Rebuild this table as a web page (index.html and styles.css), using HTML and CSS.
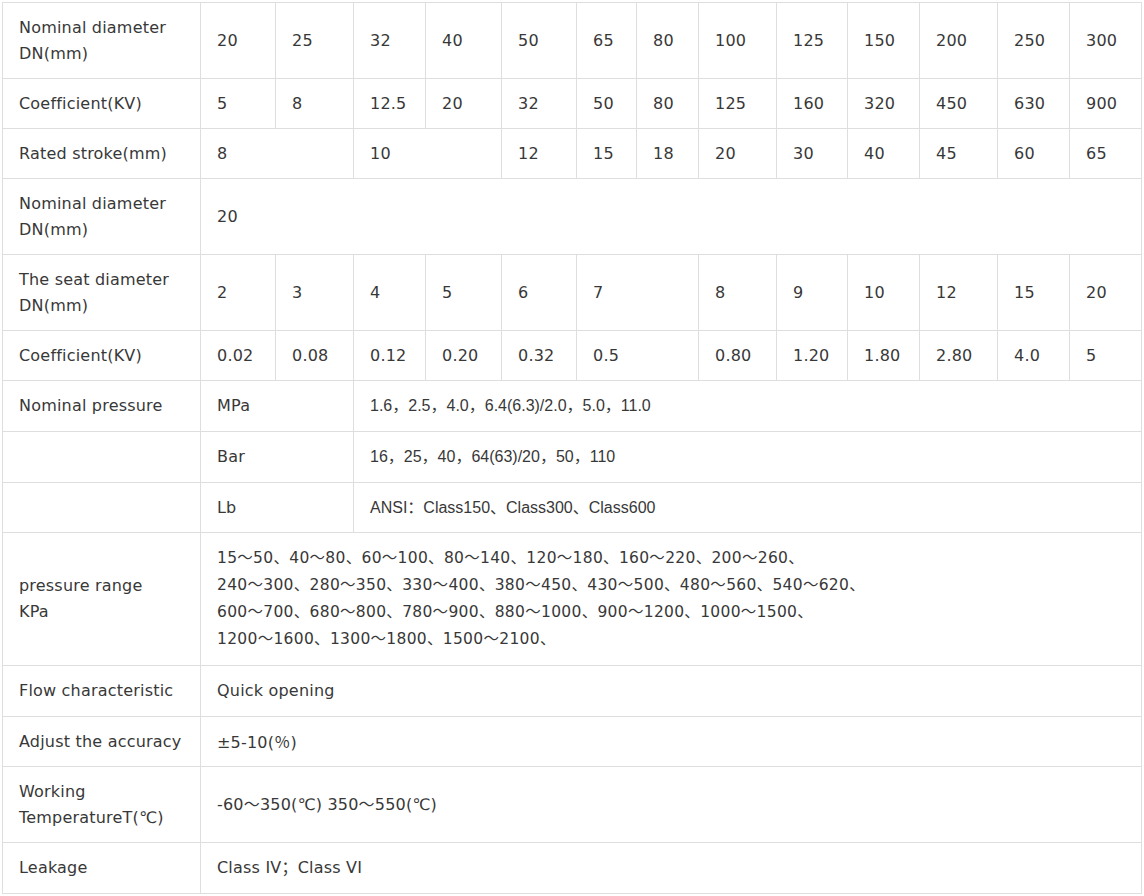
FILE: index.html
```html
<!DOCTYPE html>
<html lang="en">
<head>
<meta charset="utf-8">
<title>Parameters</title>
<link rel="stylesheet" href="styles.css">
</head>
<body>
<table class="spec">
  <colgroup>
    <col class="c-label">
    <col class="c75"><col class="c78"><col class="c72"><col class="c76"><col class="c75">
    <col class="c60"><col class="c62"><col class="c78"><col class="c71"><col class="c72">
    <col class="c78"><col class="c72"><col class="c72">
  </colgroup>
  <tbody>
    <tr class="h76">
      <td>Nominal diameter<br>DN(mm)</td>
      <td>20</td><td>25</td><td>32</td><td>40</td><td>50</td><td>65</td><td>80</td><td>100</td><td>125</td><td>150</td><td>200</td><td>250</td><td>300</td>
    </tr>
    <tr class="h50">
      <td>Coefficient(KV)</td>
      <td>5</td><td>8</td><td>12.5</td><td>20</td><td>32</td><td>50</td><td>80</td><td>125</td><td>160</td><td>320</td><td>450</td><td>630</td><td>900</td>
    </tr>
    <tr class="h50">
      <td>Rated stroke(mm)</td>
      <td colspan="2">8</td><td colspan="2">10</td><td>12</td><td>15</td><td>18</td><td>20</td><td>30</td><td>40</td><td>45</td><td>60</td><td>65</td>
    </tr>
    <tr class="h76">
      <td>Nominal diameter<br>DN(mm)</td>
      <td colspan="13">20</td>
    </tr>
    <tr class="h76">
      <td>The seat diameter<br>DN(mm)</td>
      <td>2</td><td>3</td><td>4</td><td>5</td><td>6</td><td colspan="2">7</td><td>8</td><td>9</td><td>10</td><td>12</td><td>15</td><td>20</td>
    </tr>
    <tr class="h50">
      <td>Coefficient(KV)</td>
      <td>0.02</td><td>0.08</td><td>0.12</td><td>0.20</td><td>0.32</td><td colspan="2">0.5</td><td>0.80</td><td>1.20</td><td>1.80</td><td>2.80</td><td>4.0</td><td>5</td>
    </tr>
    <tr class="h51">
      <td>Nominal pressure</td>
      <td colspan="2">MPa</td>
      <td colspan="11" class="arial">1.6，2.5，4.0，6.4(6.3)/2.0，5.0，11.0</td>
    </tr>
    <tr class="h51">
      <td></td>
      <td colspan="2">Bar</td>
      <td colspan="11" class="arial">16，25，40，64(63)/20，50，110</td>
    </tr>
    <tr class="h50">
      <td></td>
      <td colspan="2">Lb</td>
      <td colspan="11" class="arial">ANSI：Class150、Class300、Class600</td>
    </tr>
    <tr class="h133">
      <td>pressure range<br>KPa</td>
      <td colspan="13" class="ranges">15～50、40～80、60～100、80～140、120～180、160～220、200～260、<br>240～300、280～350、330～400、380～450、430～500、480～560、540～620、<br>600～700、680～800、780～900、880～1000、900～1200、1000～1500、<br>1200～1600、1300～1800、1500～2100、</td>
    </tr>
    <tr class="h51">
      <td>Flow characteristic</td>
      <td colspan="13">Quick opening</td>
    </tr>
    <tr class="h50">
      <td>Adjust the accuracy</td>
      <td colspan="13">±5-10(<span class="cjk">％</span>)</td>
    </tr>
    <tr class="h76">
      <td>Working<br>TemperatureT(℃)</td>
      <td colspan="13">-60～350(℃) 350～550(℃)</td>
    </tr>
    <tr class="h51">
      <td>Leakage</td>
      <td colspan="13">Class IV；Class VI</td>
    </tr>
  </tbody>
</table>
</body>
</html>
```

FILE: styles.css
```css
html, body {
  margin: 0;
  background: #ffffff;
}
body {
  padding: 2px 0 0 2px;
  font-family: "DejaVu Sans", "Noto Sans CJK SC", sans-serif;
  font-size: 16px;
  letter-spacing: 0.2px;
  color: #383838;
}
.spec {
  border-collapse: collapse;
  table-layout: fixed;
  width: 1140px;
}
.spec td {
  border: 1px solid #dedede;
  padding: 10px 16px 10px 16px;
  line-height: 26px;
  vertical-align: middle;
  text-align: left;
  white-space: nowrap;
}
.c-label { width: 198px; }
.c60 { width: 60px; }
.c62 { width: 62px; }
.c71 { width: 71px; }
.c72 { width: 72px; }
.c75 { width: 75px; }
.c76 { width: 76px; }
.c78 { width: 78px; }
.h50 { height: 50px; }
.h51 { height: 51px; }
.h76 { height: 76px; }
.h133 { height: 133px; }
.spec td.arial {
  font-family: "Liberation Sans", "Noto Sans CJK SC", sans-serif;
  font-size: 16px;
  letter-spacing: 0;
}
.spec td.ranges {
  font-size: 15.5px;
  line-height: 27.25px;
  letter-spacing: 0.3px;
}
.cjk {
  font-family: "Noto Sans CJK SC", sans-serif;
}
```
